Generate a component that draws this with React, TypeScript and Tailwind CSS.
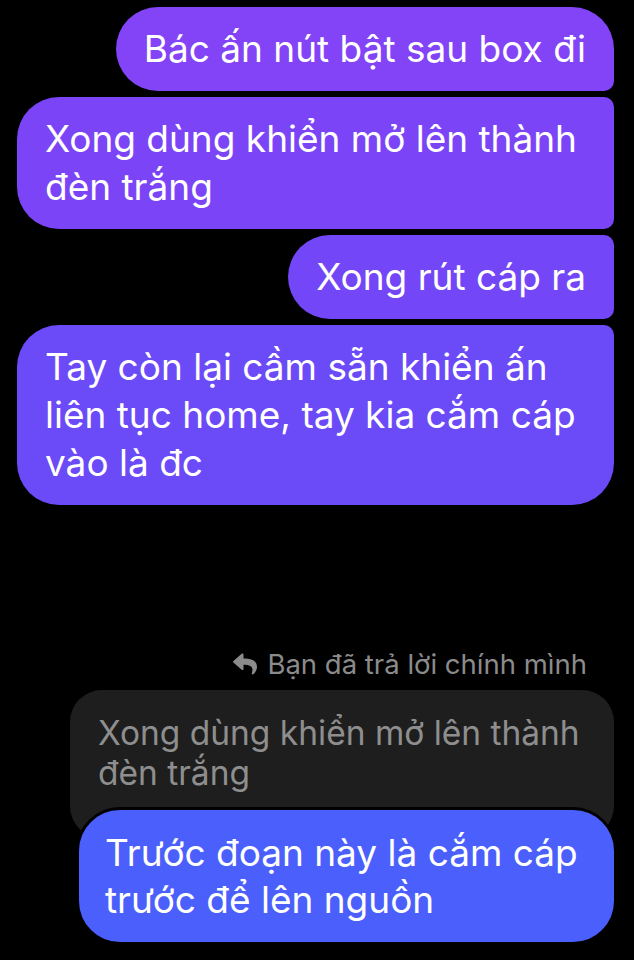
import { FaReply } from "react-icons/fa"

type BubbleProps = {
  lines: string[]
  className: string
}

function Bubble({ lines, className }: BubbleProps) {
  return (
    <div className={"px-[28px] py-[18px] text-[37px] leading-[48px] text-white whitespace-nowrap " + className}>
      {lines.map((l, i) => (
        <div key={i}>{l}</div>
      ))}
    </div>
  )
}

export default function App() {
  return (
    <div className="min-h-[960px] w-[634px] overflow-hidden bg-black font-['Inter',sans-serif] antialiased">
      <div className="flex flex-col items-end gap-[6px] pr-[20px] pt-[7px]">
        <Bubble
          lines={["Bác ấn nút bật sau box đi"]}
          className="rounded-l-[42px] rounded-tr-[42px] rounded-br-[10px] bg-[#8343f6]"
        />
        <Bubble
          lines={["Xong dùng khiển mở lên thành", "đèn trắng"]}
          className="w-[597px] rounded-l-[42px] rounded-r-[10px] bg-[#7b45f7]"
        />
        <Bubble
          lines={["Xong rút cáp ra"]}
          className="rounded-l-[42px] rounded-r-[10px] bg-[#7347f7]"
        />
        <Bubble
          lines={["Tay còn lại cầm sẵn khiển ấn", "liên tục home, tay kia cắm cáp", "vào là đc"]}
          className="w-[597px] rounded-l-[42px] rounded-tr-[10px] rounded-br-[42px] bg-[#6b4af8]"
        />
      </div>

      <div className="mt-[145px] flex flex-col items-end pr-[20px]">
        <div className="flex items-center gap-[10px] pr-[27px] text-[27.5px] leading-[28px] text-[#8b8b8b]">
          <FaReply className="h-[24px] w-[24px]" />
          <span>Bạn đã trả lời chính mình</span>
        </div>
        <div className="mt-[12px] w-[544px] rounded-[32px] bg-[#1e1e1e] px-[28px] pt-[23px] pb-[45px] text-[33.5px] leading-[40px] text-[#8e8e8e] whitespace-nowrap">
          <div>Xong dùng khiển mở lên thành</div>
          <div>đèn trắng</div>
        </div>
        <div className="-mt-[31px] -mr-[3px] w-[541px] rounded-[44px] border-[3px] border-black bg-[#4b5ffd] px-[26px] py-[19px] text-[37px] leading-[47px] text-white whitespace-nowrap">
          <div>Trước đoạn này là cắm cáp</div>
          <div>trước để lên nguồn</div>
        </div>
      </div>
    </div>
  )
}
